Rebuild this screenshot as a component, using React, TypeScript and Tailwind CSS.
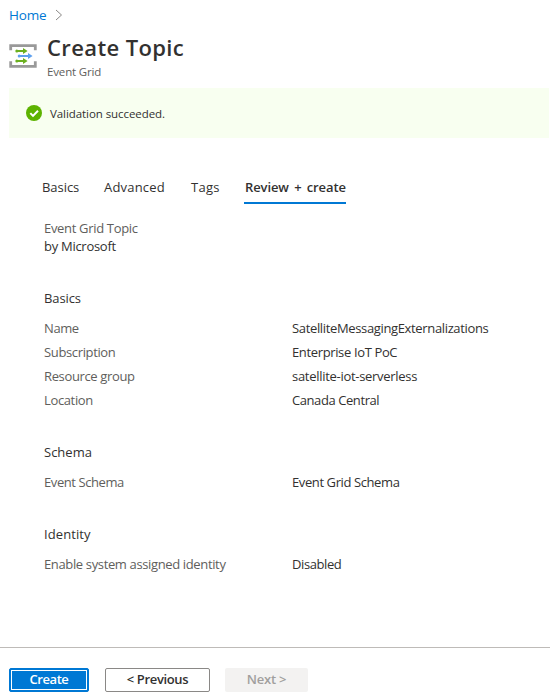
import React from "react";

type Row = { label: string; value: string; labelClass: string; valueClass: string };

function Field({ row }: { row: Row }) {
  return (
    <div className="flex h-6 items-center pt-0.5 whitespace-nowrap">
      <div className={`w-[248px] text-[#605e5c] ${row.labelClass}`}>{row.label}</div>
      <div className={row.valueClass}>{row.value}</div>
    </div>
  );
}

function Section({ title, titleClass, rows }: { title: string; titleClass: string; rows: Row[] }) {
  return (
    <section className="mb-7">
      <h2 className={`mb-1.5 h-6 leading-6 ${titleClass}`}>{title}</h2>
      {rows.map((row) => (
        <Field key={row.label} row={row} />
      ))}
    </section>
  );
}

const basics: Row[] = [
  { label: "Name", value: "SatelliteMessagingExternalizations", labelClass: "tracking-[-0.4px]", valueClass: "tracking-[-0.35px]" },
  { label: "Subscription", value: "Enterprise IoT PoC", labelClass: "tracking-[-0.36px]", valueClass: "tracking-[-0.36px]" },
  { label: "Resource group", value: "satellite-iot-serverless", labelClass: "tracking-[-0.36px]", valueClass: "tracking-[-0.29px]" },
  { label: "Location", value: "Canada Central", labelClass: "tracking-[-0.36px]", valueClass: "tracking-[-0.42px]" },
];
const schema: Row[] = [
  { label: "Event Schema", value: "Event Grid Schema", labelClass: "tracking-[-0.42px]", valueClass: "tracking-[-0.4px]" },
];
const identity: Row[] = [
  { label: "Enable system assigned identity", value: "Disabled", labelClass: "tracking-[-0.36px]", valueClass: "tracking-[-0.4px]" },
];

function TopicIcon() {
  return (
    <svg className="mt-[5px] h-7 w-7 shrink-0" viewBox="0 0 28 28" fill="none">
      <path d="M1.7 8.3V3.7H26.3V8.3M1.7 19.3V24.3H26.3V19.3" stroke="#999" strokeWidth="2.8" />
      <g fill="#6bb020">
        <path d="M7 8h7V5.9l4.6 3.1L14 12.1V10H7z" />
        <circle cx="7.8" cy="9" r="1.5" />
        <path d="M7 18h7v-2.1l4.6 3.1-4.6 3.1V20H7z" />
        <circle cx="7.8" cy="19" r="1.5" />
      </g>
      <g fill="#5ea0ef">
        <path d="M10 13h9v-2.1l4.6 3.1-4.6 3.1V15h-9z" />
        <circle cx="10.2" cy="14" r="1.5" />
      </g>
    </svg>
  );
}

export default function App() {
  return (
    <div className="flex h-[698px] w-[550px] flex-col overflow-hidden bg-white font-['Open_Sans','Noto_Sans',sans-serif] text-[13px] text-[#323130]">
      <nav className="flex h-[30px] items-center pl-[9px]">
        <a className="w-[46px] pt-px text-[13.5px] tracking-[-0.2px] text-[#0078d4]">Home</a>
        <svg className="h-3 w-2" viewBox="0 0 8 12" fill="none" stroke="#8a8886">
          <path d="M1 1l5.5 5L1 11" />
        </svg>
      </nav>
      <header className="flex h-[58px] pl-[9px]">
        <div className="pt-[7px]"><TopicIcon /></div>
        <div className="ml-[10px]">
          <h1 className="h-9 text-[22px] leading-[34px] font-semibold tracking-[0.38px]">Create Topic</h1>
          <p className="h-3 text-[11.5px] leading-3 tracking-[-0.15px] text-[#605e5c]">Event Grid</p>
        </div>
      </header>
      <div className="mr-px ml-[9px] flex h-[50px] items-center bg-[#f8fff0] pl-[17px]">
        <svg className="h-4 w-4" viewBox="0 0 16 16" fill="none">
          <circle cx="8" cy="8" r="8" fill="#5db300" />
          <path d="M4.3 8.1l2.7 2.8 5-5.2" stroke="white" strokeWidth="2" />
        </svg>
        <span className="ml-2 pt-0.5 text-[11.5px] tracking-[-0.07px]">Validation succeeded.</span>
      </div>
      <div className="mt-8 ml-[42px] flex h-[34px] whitespace-nowrap text-[13px] leading-[34px]">
        <span className="w-[62px] tracking-[-0.05px]">Basics</span>
        <span className="w-[87px] tracking-[0.2px]">Advanced</span>
        <span className="w-[53px] tracking-[0.3px]">Tags</span>
        <span className="w-[102px] border-b-2 border-[#0078d4] pl-px font-semibold tracking-[-0.1px] [word-spacing:2px]">Review + create</span>
      </div>
      <main className="ml-11 pt-[15px]">
        <div className="mb-[31px] leading-[18px]">
          <p className="tracking-[-0.32px] text-[#605e5c]">Event Grid Topic</p>
          <p className="tracking-[-0.28px]">by Microsoft</p>
        </div>
        <Section title="Basics" titleClass="tracking-[-0.1px]" rows={basics} />
        <Section title="Schema" titleClass="" rows={schema} />
        <Section title="Identity" titleClass="tracking-[0.1px]" rows={identity} />
      </main>
      <footer className="mt-auto flex h-[51px] border-t border-[#bebbb8] pt-5 pl-[9px] font-semibold">
        <button className="h-6 w-20 rounded-[2px] border border-[#0078d4] bg-[#0078d4] p-px text-white">
          <span className="flex h-5 items-center justify-center border border-white tracking-[-0.45px]">Create</span>
        </button>
        <button className="ml-4 flex h-6 w-[105px] items-center justify-center rounded-[2px] border border-[#8a8886] tracking-[-0.35px]">&lt; Previous</button>
        <button disabled className="ml-[15px] flex h-6 w-[83px] items-center justify-center rounded-[2px] bg-[#f3f2f1] tracking-[-0.2px] text-[#a19f9d]">Next &gt;</button>
      </footer>
    </div>
  );
}
